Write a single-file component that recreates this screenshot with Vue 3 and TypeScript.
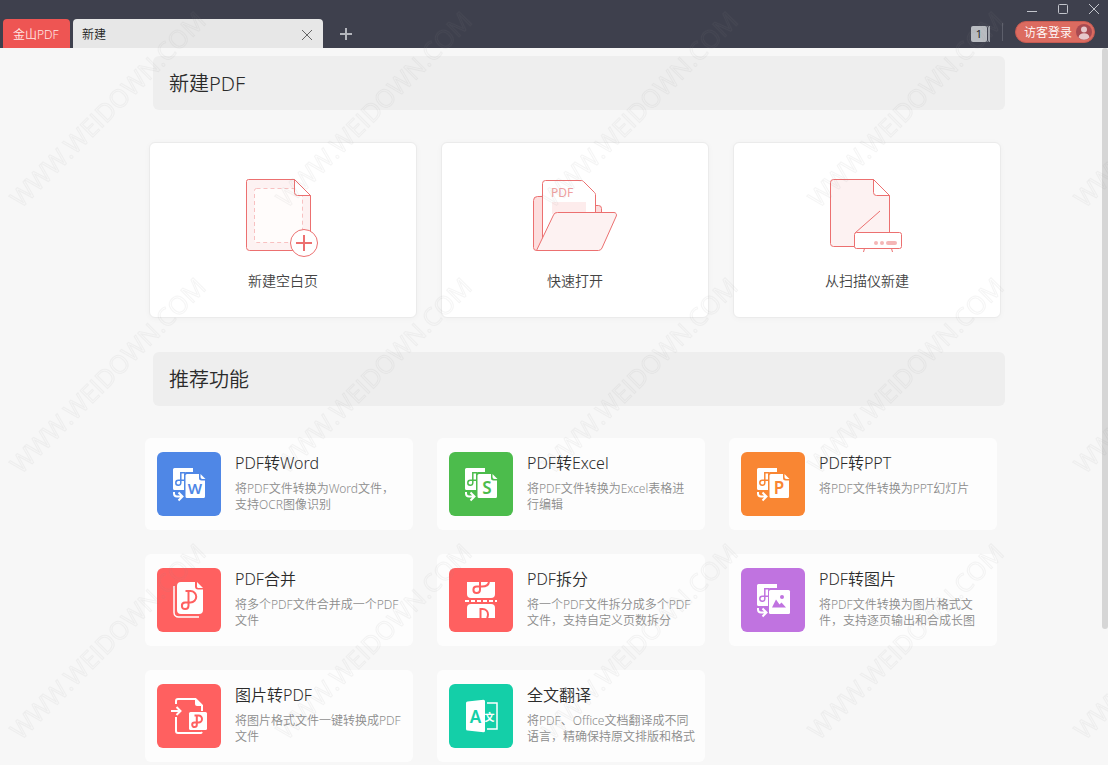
<script setup lang="ts">
type CreateKind = 'blank' | 'open' | 'scan'
type FeatureKind = 'letter' | 'picture' | 'merge' | 'split' | 'import' | 'translate'

interface CreateCard {
  kind: CreateKind
  label: string
}

interface Feature {
  kind: FeatureKind
  tone: string
  title: string
  text: string
  letter?: string
}

const createCards: CreateCard[] = [
  { kind: 'blank', label: '新建空白页' },
  { kind: 'open', label: '快速打开' },
  { kind: 'scan', label: '从扫描仪新建' },
]

const features: Feature[] = [
  { kind: 'letter', letter: 'W', tone: 'blue', title: 'PDF转Word', text: '将PDF文件转换为Word文件，支持OCR图像识别' },
  { kind: 'letter', letter: 'S', tone: 'green', title: 'PDF转Excel', text: '将PDF文件转换为Excel表格进行编辑' },
  { kind: 'letter', letter: 'P', tone: 'orange', title: 'PDF转PPT', text: '将PDF文件转换为PPT幻灯片' },
  { kind: 'merge', tone: 'red', title: 'PDF合并', text: '将多个PDF文件合并成一个PDF文件' },
  { kind: 'split', tone: 'red', title: 'PDF拆分', text: '将一个PDF文件拆分成多个PDF文件，支持自定义页数拆分' },
  { kind: 'picture', tone: 'purple', title: 'PDF转图片', text: '将PDF文件转换为图片格式文件，支持逐页输出和合成长图' },
  { kind: 'import', tone: 'red', title: '图片转PDF', text: '将图片格式文件一键转换成PDF文件' },
  { kind: 'translate', tone: 'teal', title: '全文翻译', text: '将PDF、Office文档翻译成不同语言，精确保持原文排版和格式' },
]
</script>

<template>
  <div class="window">
    <header class="titlebar">
      <nav class="tabs" aria-label="标签页">
        <button class="tab home" type="button">金山PDF</button>
        <div class="tab active">
          <button class="tab-name" type="button">新建</button>
          <button class="icon-btn close-tab" type="button" aria-label="关闭标签">
            <svg width="12" height="12" viewBox="0 0 12 12"><path d="M1 1L11 11M11 1L1 11" /></svg>
          </button>
        </div>
        <button class="icon-btn add-tab" type="button" aria-label="新建标签">
          <svg width="12" height="12" viewBox="0 0 12 12"><path d="M6 0V12M0 6H12" /></svg>
        </button>
      </nav>

      <div class="tools">
        <div class="window-controls">
          <button class="icon-btn" type="button" aria-label="最小化">
            <svg width="12" height="12" viewBox="0 0 12 12"><path d="M1 8.5H11" /></svg>
          </button>
          <button class="icon-btn" type="button" aria-label="最大化">
            <svg width="12" height="12" viewBox="0 0 12 12"><rect x="1.5" y="1.5" width="9" height="9" rx="1" /></svg>
          </button>
          <button class="icon-btn" type="button" aria-label="关闭">
            <svg width="12" height="12" viewBox="0 0 12 12"><path d="M1 1L11 11M11 1L1 11" /></svg>
          </button>
        </div>
        <div class="account">
          <button class="count" type="button" aria-label="已打开的标签数"><span>1</span></button>
          <span class="divider"></span>
          <button class="login" type="button">
            访客登录
            <svg width="16" height="16" viewBox="0 0 16 16">
              <circle cx="8" cy="8" r="8" fill="#a84a51" />
              <circle cx="8" cy="5.5" r="3" fill="#e6c8cc" />
              <path d="M2.5 13.5C3 10.5 5 9.3 8 9.3s5 1.2 5.500 4.200A8 8 0 0 1 2.500 13.500Z" fill="#e6c8cc" />
            </svg>
          </button>
        </div>
      </div>
    </header>

    <div class="body">
      <main>
        <section>
          <h2>新建PDF</h2>
          <div class="grid create-grid">
            <button v-for="card in createCards" :key="card.kind" class="create-card" type="button">
              <svg class="line-art" width="88" height="80" viewBox="0 0 88 80" aria-hidden="true">
                <g v-if="card.kind === 'blank'">
                  <path class="tint" d="M9.500 1.500H55.500L71.500 17.500V72.500H10.500a3 3 0 0 1-3-3V3.500a2 2 0 0 1 2-2Z" />
                  <rect class="dashed" x="15.500" y="10.500" width="48" height="54" rx="2" />
                  <path class="plain" d="M55.500 1.500V14.500a3 3 0 0 0 3 3H71.500Z" />
                  <circle class="plain" cx="65" cy="65" r="13.500" />
                  <path class="thick" d="M65 57V73M57 65H73" />
                </g>
                <g v-else-if="card.kind === 'open'">
                  <path class="deep" d="M12 18.500H6.500a4 4 0 0 0-4 4V69.500a3 3 0 0 0 3 3H60V27.500H67.500a3 3 0 0 1 3 3V36" />
                  <path class="plain" d="M11.500 62V5.500a3 3 0 0 1 3-3H50.500a3 3 0 0 1 2 1L63.500 14.500a3 3 0 0 1 1 2V36L11.500 62Z" />
                  <rect x="21" y="24" width="34" height="12" fill="#fdecec" stroke="none" />
                  <text class="paper-label" x="20" y="19">PDF</text>
                  <path class="tint" d="M26.500 34.500H83a2.500 2.500 0 0 1 2.300 3.500L71 70a4 4 0 0 1-3.500 2.500H5.500L22.500 37a4 4 0 0 1 4-2.500Z" />
                </g>
                <g v-else>
                  <path class="tint" d="M10.500 1.500H50.500L66.500 17.500V68.500H10.500a3 3 0 0 1-3-3V4.500a3 3 0 0 1 3-3Z" />
                  <path class="plain" d="M50.500 1.500V14.500a3 3 0 0 0 3 3H66.500Z" />
                  <path d="M32 55L57 33" fill="none" />
                  <path d="M41.500 70.500L40.500 74M68.500 70.500L69.500 74" />
                  <rect class="plain" x="31.500" y="54.500" width="47" height="16" rx="2" />
                  <g class="lights">
                    <circle cx="53" cy="65" r="2" />
                    <circle cx="59" cy="65" r="2" />
                    <rect x="63" y="63" width="11" height="4" rx="2" />
                  </g>
                </g>
              </svg>
              <span>{{ card.label }}</span>
            </button>
          </div>
        </section>

        <section>
          <h2>推荐功能</h2>
          <div class="grid feature-grid">
            <button v-for="item in features" :key="item.title" class="feature" type="button">
              <svg class="tile" :class="item.tone" width="64" height="64" viewBox="0 0 64 64" aria-hidden="true">
                <template v-if="item.kind === 'letter' || item.kind === 'picture'">
                  <path class="solid" d="M17.500 16H36V20H29a2 2 0 0 0-2 2V38H17.500a1.500 1.500 0 0 1-1.500-1.500V17.500a1.500 1.500 0 0 1 1.500-1.500Z" />
                  <path class="cut slim" d="M28 20.800H23.800V31a2.500 2.500 0 1 1-2.500-2.700H28" />
                  <path class="line" d="M17 40V41.500a3 3 0 0 0 3 3H25M21.500 40.500L25.500 44.500L21.500 48.500" />
                </template>

                <template v-if="item.kind === 'letter'">
                  <path class="solid" d="M30 22H42V26a2.500 2.500 0 0 0 2.500 2.500H48V44.500a1.500 1.500 0 0 1-1.500 1.500H30a1.500 1.500 0 0 1-1.500-1.500V23.500a1.500 1.500 0 0 1 1.500-1.500Z" />
                  <path class="solid" d="M43.500 22L48.500 27H45.500a2 2 0 0 1-2-2Z" />
                  <text class="letter" :class="{ wide: item.letter === 'W' }" x="38" y="42">{{ item.letter }}</text>
                </template>

                <template v-else-if="item.kind === 'picture'">
                  <rect class="solid" x="28" y="22" width="21" height="24" rx="1.500" />
                  <circle class="hole" cx="41" cy="29" r="2" />
                  <path class="hole" d="M31 39.500L35 31.500L38.500 36.500L40.500 34.500L45 39.500Z" />
                </template>

                <template v-else-if="item.kind === 'merge'">
                  <path class="line slim" d="M17 18V44.500a4.500 4.500 0 0 0 4.500 4.500H42" />
                  <path class="solid" d="M24 14H38V18.500a3 3 0 0 0 3 3H46V42a4 4 0 0 1-4 4H24a4 4 0 0 1-4-4V18a4 4 0 0 1 4-4Z" />
                  <path class="solid" d="M40 14L46 20H41.500a1.500 1.500 0 0 1-1.500-1.500Z" />
                  <path class="cut" d="M28.500 23H33.500a5.500 5.500 0 0 1 0 11.500H28a3.300 3.300 0 1 0 3.500 3.300V23" />
                </template>

                <template v-else-if="item.kind === 'split'">
                  <path class="solid" d="M18 14H46V26a4 4 0 0 1-4 4H22a4 4 0 0 1-4-4Z" />
                  <path class="solid" d="M22 36H42a4 4 0 0 1 4 4V50H18V40a4 4 0 0 1 4-4Z" />
                  <path class="line dash" d="M16 33H48" />
                  <path class="cut" d="M31 14V22a3.300 3.300 0 1 1-3.300-3.500H33C37 18.500 39.500 17 40 14" />
                  <path class="cut" d="M31.500 50V41H33.500C37 41 39 43.500 39 46.500C39 48 38.600 49 38 50" />
                </template>

                <template v-else-if="item.kind === 'import'">
                  <path class="line" d="M19 20V17a2 2 0 0 1 2-2H38.500L45 21.500V27M19 33V47a2 2 0 0 0 2 2H43a2 2 0 0 0 2-1" />
                  <path class="solid" d="M38 14L46 22H40a2 2 0 0 1-2-2Z" />
                  <path class="line" d="M14 27H23M19.500 23L23.500 27L19.500 31" />
                  <rect class="solid" x="32" y="28" width="18" height="18" rx="1.500" />
                  <path class="cut" d="M37.500 31.500H41.500a3.300 3.300 0 0 1 0 7H37.500a2.300 2.300 0 1 0 2.300 2.300V31.500" />
                </template>

                <template v-else>
                  <path class="line slim" d="M38 19H48V45H38" />
                  <path class="solid" d="M18.500 17.500L34.500 15.800a1.500 1.500 0 0 1 1.500 1.500V46.700a1.500 1.500 0 0 1-1.500 1.500L18.500 46.500A1.500 1.500 0 0 1 17 45V19A1.500 1.500 0 0 1 18.500 17.500Z" />
                  <text class="letter" x="26.500" y="39">A</text>
                  <text class="han" x="40.500" y="37">文</text>
                </template>
              </svg>
              <span class="feature-copy">
                <strong>{{ item.title }}</strong>
                <span>{{ item.text }}</span>
              </span>
            </button>
          </div>
        </section>
      </main>
      <div class="rail" aria-hidden="true"><div class="thumb"></div></div>
    </div>

    <svg class="watermark" width="100%" height="100%" aria-hidden="true">
      <defs>
        <pattern id="mark" width="266" height="266" patternUnits="userSpaceOnUse" y="-52">
          <text x="21" y="261" transform="rotate(-45 21 261)">WWW.WEIDOWN.COM</text>
        </pattern>
      </defs>
      <rect width="100%" height="100%" fill="url(#mark)" />
    </svg>
  </div>
</template>

<style>
body {
  margin: 0;
  background: #f7f7f7;
}
</style>

<style scoped>
.window {
  position: relative;
  display: flex;
  flex-direction: column;
  height: 100vh;
  overflow: hidden;
  background: #f7f7f7;
  color: #333;
  font-family: "Noto Sans", "Noto Sans CJK SC", sans-serif;
  font-size: 12px;
  font-weight: 350;
}

button {
  margin: 0;
  padding: 0;
  border: 0;
  background: none;
  color: inherit;
  font: inherit;
  cursor: pointer;
}

svg {
  display: block;
  flex: none;
}

.titlebar {
  display: flex;
  justify-content: space-between;
  flex: none;
  height: 48px;
  background: #3e404d;
}

.tabs {
  display: flex;
  align-items: flex-end;
  gap: 3px;
  padding-left: 3px;
}

.tab {
  height: 29px;
  border-radius: 4px 4px 0 0;
}

.home {
  min-width: 67px;
  padding: 0 10px;
  background: #ee5553;
  color: #ffe9e6;
  text-align: left;
}

.active {
  display: flex;
  align-items: center;
  width: 250px;
  background: #e7e7e7;
  color: #222;
}

.tab-name {
  flex: 1;
  height: 100%;
  padding-left: 9px;
  text-align: left;
}

.icon-btn svg {
  fill: none;
  stroke: #c3c5cc;
}

.close-tab {
  padding: 3px 10px 0;
}

.close-tab svg {
  stroke: #666;
}

.add-tab {
  padding: 8px 14px;
}

.add-tab svg {
  stroke: #b4b6bd;
  stroke-width: 2;
}

.tools {
  display: flex;
  flex-direction: column;
  align-items: flex-end;
}

.window-controls {
  display: flex;
  align-items: center;
  gap: 19px;
  height: 18px;
  padding-right: 8px;
}

.account {
  display: flex;
  align-items: center;
  gap: 12px;
  height: 28px;
  padding-right: 13px;
}

.count {
  display: flex;
  margin-top: 4px;
  padding-right: 2px;
  border-right: 1px solid #9ea1a9;
}

.count span {
  padding: 0 5px;
  border-radius: 2px;
  background: #b9bcc1;
  color: #222;
  font-size: 11px;
  font-weight: 400;
  line-height: 16px;
  box-shadow: 1px 0 #3e404d, 2px 0 #9ea1a9;
}

.divider {
  width: 1px;
  height: 18px;
  background: #5d5f6b;
}

.login {
  display: flex;
  align-items: center;
  gap: 4px;
  height: 22px;
  padding: 0 2px 0 8px;
  border: 1px solid #c65a52;
  border-radius: 11px;
  background: #dc6b60;
  color: #fff;
  white-space: nowrap;
}

.body {
  display: flex;
  flex: 1;
  min-height: 0;
}

main {
  flex: 1;
  min-width: 0;
  padding: 8px 97px 0 145px;
  overflow-y: auto;
  scrollbar-width: none;
}

section + section {
  margin-top: 34px;
}

h2 {
  margin: 0 0 32px 8px;
  padding: 2px 16px 0;
  border-radius: 6px;
  background: #eee;
  color: #2b2b2b;
  font-size: 20px;
  font-weight: 350;
  line-height: 52px;
}

.grid {
  display: grid;
  grid-template-columns: repeat(3, minmax(0, 1fr));
  gap: 24px;
}

.create-grid {
  margin: 0 4px;
}

.create-card {
  display: flex;
  flex-direction: column;
  align-items: center;
  gap: 13px;
  padding: 35px 0 26px;
  border: 1px solid #ebebeb;
  border-radius: 6px;
  background: #fff;
  box-shadow: 0 1px 6px rgba(0, 0, 0, 0.03);
  color: #444;
  font-size: 14px;
  line-height: 20px;
}

.line-art {
  stroke: #ec7070;
  stroke-linejoin: round;
}

.tint {
  fill: #fdf2f2;
}

.deep {
  fill: #fddede;
}

.plain {
  fill: #fff;
}

.dashed {
  fill: #fffcfb;
  stroke: #f8c1c1;
  stroke-dasharray: 4 3;
}

.thick {
  stroke-width: 2;
}

.paper-label {
  fill: #f0a0a0;
  stroke: none;
  font-size: 12px;
  font-weight: 400;
}

.lights {
  fill: #f4b6b6;
  stroke: none;
}

.feature-grid {
  margin-right: 8px;
}

.feature {
  display: flex;
  gap: 14px;
  padding: 14px 10px 14px 12px;
  border-radius: 6px;
  background: #fdfdfd;
  text-align: left;
}

.tile {
  border-radius: 6px;
  background: var(--tone);
}

.blue { --tone: #4f87e6; }
.green { --tone: #4cbc4c; }
.orange { --tone: #f98633; }
.red { --tone: #ff6060; }
.purple { --tone: #c073e0; }
.teal { --tone: #14cfa8; }

.solid {
  fill: #fff;
}

.hole {
  fill: var(--tone);
}

.line,
.cut {
  fill: none;
  stroke: #fff;
  stroke-width: 2;
}

.cut {
  stroke: var(--tone);
}

.slim {
  stroke-width: 1.5;
}

.dash {
  stroke-dasharray: 4 2;
}

.letter {
  fill: var(--tone);
  font-size: 17px;
  font-weight: 600;
  text-anchor: middle;
}

.wide {
  font-size: 15px;
}

.han {
  fill: #fff;
  font-size: 10px;
  font-weight: 700;
  text-anchor: middle;
}

.feature-copy {
  display: flex;
  flex-direction: column;
  gap: 7px;
  min-width: 0;
  color: #8c8c8c;
  line-height: 16px;
}

.feature-copy strong {
  color: #2b2b2b;
  font-size: 16px;
  font-weight: 350;
  line-height: 22px;
}

.rail {
  display: grid;
  grid-template-rows: 81fr 19fr;
  width: 6px;
}

.thumb {
  border-radius: 3px;
  background: #d6d6d6;
}

.watermark {
  position: absolute;
  inset: 0;
  pointer-events: none;
}

.watermark text {
  fill: rgba(128, 128, 128, 0.01);
  stroke: #808080;
  stroke-opacity: 0.08;
  font-family: "Open Sans", sans-serif;
  font-size: 25px;
  font-weight: 400;
}
</style>
